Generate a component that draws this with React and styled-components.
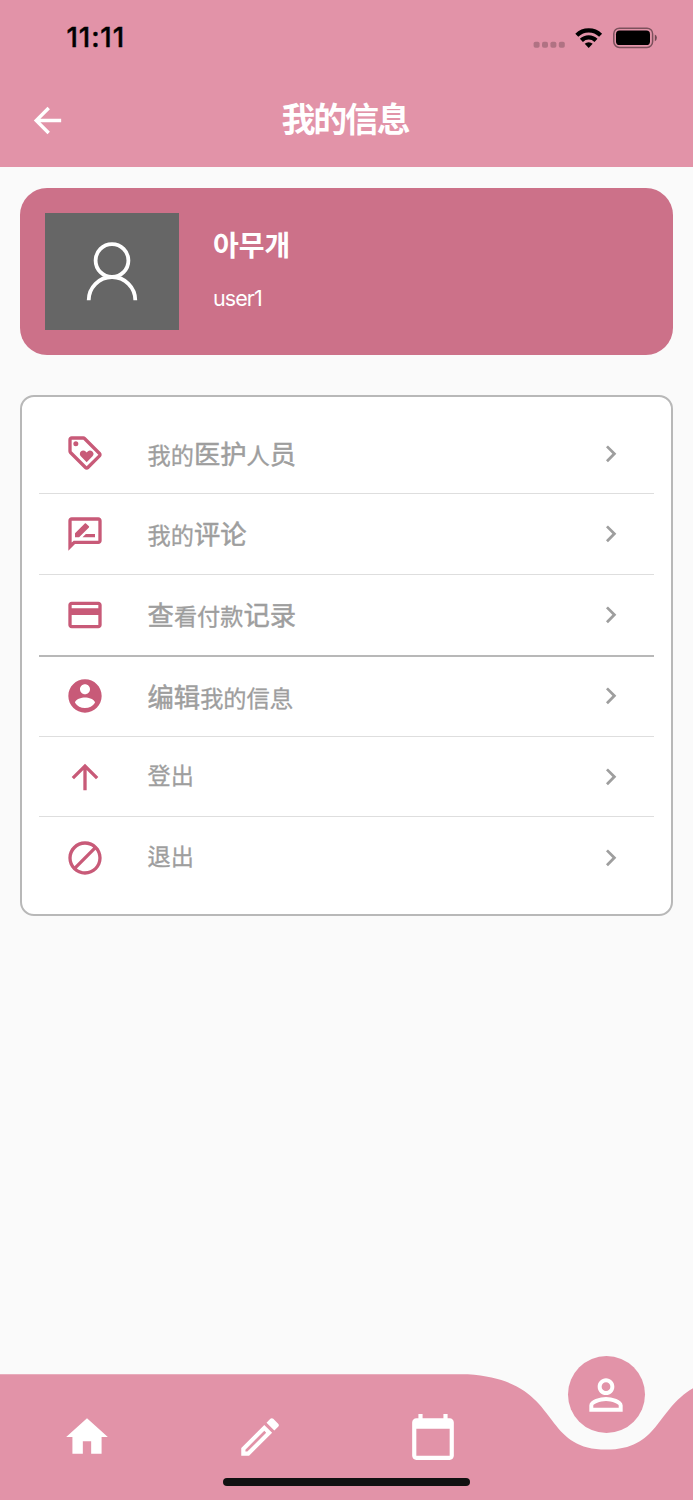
import React from 'react';
import styled, { createGlobalStyle } from 'styled-components';
import {
	MdArrowBack,
	MdArrowUpward,
	MdCalendarToday,
	MdChevronRight,
	MdCreditCard,
	MdDoNotDisturbAlt,
	MdHome,
	MdOutlineEdit,
	MdOutlineLoyalty,
	MdOutlineRateReview,
	MdPersonOutline,
} from 'react-icons/md';

const GlobalStyle = createGlobalStyle`
	:root {
		--pink: #e293a8;
		--rose: #cc7189;
		--accent: #c85a78;
		--grey: #9e9e9e;
		--page: #fafafa;
	}

	* {
		box-sizing: border-box;
		margin: 0;
		padding: 0;
	}

	body {
		background: var(--page);
		font-family: 'Noto Sans CJK SC', 'Noto Sans', sans-serif;
	}
`;

const Screen = styled.div`
	display: flex;
	flex-direction: column;
	width: 693px;
	height: 1500px;
	overflow: hidden;
	background: var(--page);
`;

const Header = styled.header`
	height: 167.4px;
	flex: none;
	background: var(--pink);
`;

const StatusBar = styled.div`
	display: flex;
	align-items: center;
	justify-content: space-between;
	height: 74px;
	padding: 2px 36px 0 66.5px;
`;

const Clock = styled.time`
	font-family: Inter, sans-serif;
	font-size: 27.5px;
	font-weight: 500;
	line-height: 1;
	letter-spacing: 0.9px;
	color: #000;
	-webkit-text-stroke: 0.4px #000;
`;

const StatusIcons = styled.svg`
	display: block;
	width: 124px;
	height: 24px;
`;

const TitleBar = styled.div`
	display: grid;
	grid-template-columns: 94px 1fr 94px;
	align-items: center;
	height: 93px;
	color: #fff;

	svg {
		justify-self: center;
	}
`;

const Title = styled.h1`
	padding: 0 3px 5px 0;
	font-size: 34px;
	font-weight: 700;
	line-height: 40px;
	letter-spacing: -2.3px;
	text-align: center;
`;

const Main = styled.main`
	display: flex;
	flex: 1;
	flex-direction: column;
	gap: 40px;
	padding: 20.4px 20.4px 0;
`;

const ProfileCard = styled.section`
	display: flex;
	gap: 33.5px;
	height: 167.4px;
	padding: 25px;
	border-radius: 27px;
	background: var(--rose);
	color: #fff;
`;

const Avatar = styled.div`
	display: flex;
	width: 134px;
	height: 117px;
	background: #666;
`;

const ProfileText = styled.div`
	display: flex;
	flex-direction: column;
	gap: 19px;
	padding-top: 11px;
`;

const Name = styled.h2`
	font-family: 'Noto Sans CJK KR', sans-serif;
	font-size: 28px;
	font-weight: 700;
	line-height: 40px;
`;

const UserId = styled.p`
	font-family: Inter, sans-serif;
	font-size: 21.5px;
	line-height: 30px;
	letter-spacing: -0.9px;
`;

const Menu = styled.ul`
	list-style: none;
	height: 521px;
	padding: 16.6px 17px;
	border: 2px solid #b8b8b8;
	border-radius: 14px;
	background: #fff;
`;

const MenuRow = styled.li`
	display: grid;
	grid-template-columns: 40px 1fr 33.5px;
	column-gap: 42.4px;
	align-items: center;
	height: ${({ $divider }) => ($divider === 'strong' ? 82 : 80.4)}px;
	padding: 0 26.4px 0 25.8px;
	border-bottom: ${({ $divider }) => {
		if ($divider === 'strong') return '2px solid #b8b8b8';
		return $divider ? '1px solid #dedede' : 'none';
	}};
	color: var(--grey);

	> svg:first-child {
		color: var(--accent);
	}
`;

const Label = styled.span`
	display: flex;
	align-items: baseline;
	line-height: 36px;
	padding-bottom: ${({ $lift }) => ($lift ? 5 : 0)}px;
`;

const Run = styled.span`
	font-family: ${({ $wide }) => ($wide ? "'Noto Sans CJK SC'" : "'Noto Sans CJK KR'")}, sans-serif;
	font-size: ${({ $wide }) => ($wide ? 26.3 : 23.2)}px;
	-webkit-text-stroke: ${({ $wide }) => ($wide ? 0.5 : 0.3)}px currentColor;
`;

const Nav = styled.nav`
	position: relative;
	flex: none;
	height: 126px;
`;

const NavShape = styled.svg`
	position: absolute;
	inset: 0;
`;

const NavItems = styled.div`
	position: relative;
	display: grid;
	grid-template-columns: repeat(4, 1fr);
	justify-items: center;
	height: 126px;
	padding-top: 38px;
	color: #fff;
`;

const ActiveItem = styled.div`
	display: flex;
	align-items: center;
	justify-content: center;
	width: 77px;
	height: 77px;
	margin-top: -56px;
	border-radius: 50%;
	background: var(--pink);
`;

const HomeIndicator = styled.div`
	position: absolute;
	left: 223px;
	bottom: 14px;
	width: 247px;
	height: 8px;
	border-radius: 4px;
	background: #111;
`;

const AccountIcon = () => (
	<svg width="40" height="40" viewBox="0 0 24 24" fill="currentColor">
		<path d="M12 2C6.48 2 2 6.48 2 12s4.48 10 10 10 10-4.48 10-10S17.52 2 12 2zm0 3c1.66 0 3 1.34 3 3s-1.34 3-3 3-3-1.34-3-3 1.34-3 3-3zm0 14.2c-2.5 0-4.71-1.28-6-3.22.03-1.99 4-3.08 6-3.08 1.99 0 5.97 1.09 6 3.08-1.29 1.94-3.5 3.22-6 3.22z" />
	</svg>
);

const menuItems = [
	{ icon: MdOutlineLoyalty, runs: ['我的', '*医护', '人', '*员'], divider: 'light' },
	{ icon: MdOutlineRateReview, runs: ['我的', '*评论'], divider: 'light' },
	{ icon: MdCreditCard, runs: ['*查', '看付款', '*记录'], divider: 'strong' },
	{ icon: AccountIcon, runs: ['*编辑', '我的信息'], divider: 'light' },
	{ icon: MdArrowUpward, runs: ['登出'], divider: 'light', lift: true },
	{ icon: MdDoNotDisturbAlt, runs: ['退出'], lift: true },
];

const StatusGlyphs = () => (
	<StatusIcons viewBox="533 26 124 24">
		<g fill="#000" fillOpacity="0.22">
			<rect x="533.6" y="41.8" width="6" height="6" rx="1.8" />
			<rect x="542" y="41.8" width="6" height="6" rx="1.8" />
			<rect x="550.4" y="41.8" width="6" height="6" rx="1.8" />
			<rect x="558.8" y="41.8" width="6" height="6" rx="1.8" />
		</g>
		<g fill="none" stroke="#000" strokeWidth="4.3">
			<path d="M576.8 35.2a17 17 0 0 1 23.8 0" />
			<path d="M581.4 40.4a10.4 10.4 0 0 1 14.6 0" />
		</g>
		<path d="M588.7 48l-4-4.2a5.8 5.8 0 0 1 8 0z" fill="#000" />
		<rect x="613.8" y="28.2" width="38.8" height="19.2" rx="5.6" fill="none" stroke="#000" strokeOpacity="0.45" strokeWidth="1.5" />
		<rect x="616" y="30.6" width="34" height="14.4" rx="3.6" fill="#000" />
		<path d="M654.8 34.4q2.1.9 2.1 3.4t-2.1 3.4z" fill="#000" fillOpacity="0.5" />
	</StatusIcons>
);

const App = () => (
	<>
		<GlobalStyle />
		<Screen>
			<Header>
				<StatusBar>
					<Clock>11:11</Clock>
					<StatusGlyphs />
				</StatusBar>
				<TitleBar>
					<MdArrowBack size={41} />
					<Title>我的信息</Title>
				</TitleBar>
			</Header>
			<Main>
				<ProfileCard>
					<Avatar>
						<svg width="134" height="117" viewBox="0 0 134 117" fill="none" stroke="#fff" strokeWidth="3.8">
							<circle cx="67" cy="47.5" r="16.4" />
							<path d="M43.7 87.3a23.3 23.3 0 0 1 46.6 0" />
						</svg>
					</Avatar>
					<ProfileText>
						<Name>아무개</Name>
						<UserId>user1</UserId>
					</ProfileText>
				</ProfileCard>
				<Menu>
					{menuItems.map(({ icon: Icon, runs, divider, lift }) => (
						<MenuRow key={runs.join('')} $divider={divider}>
							<Icon size={40} />
							<Label $lift={lift}>
								{runs.map(run => (
									<Run key={run} $wide={run.startsWith('*')}>
										{run.replace('*', '')}
									</Run>
								))}
							</Label>
							<MdChevronRight size={33.5} />
						</MenuRow>
					))}
				</Menu>
			</Main>
			<Nav>
				<NavShape width="693" height="126" viewBox="0 0 693 126" fill="#e293a8">
					<path d="M0 0.3H467.8C564.8 6.5 537.1 75.5 606.4 75.5S648 6.5 745 0.3V126H0z" />
				</NavShape>
				<NavItems>
					<MdHome size={50} />
					<MdOutlineEdit size={50} />
					<MdCalendarToday size={50} />
					<ActiveItem>
						<MdPersonOutline size={50} />
					</ActiveItem>
				</NavItems>
				<HomeIndicator />
			</Nav>
		</Screen>
	</>
);

export default App;
